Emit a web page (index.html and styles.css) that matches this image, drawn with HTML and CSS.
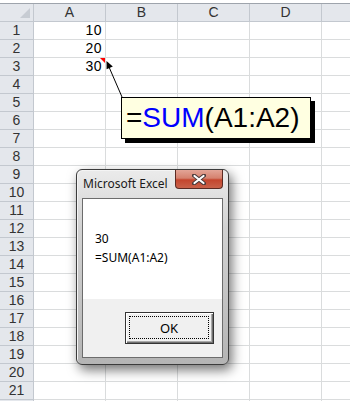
FILE: index.html
```html
<!DOCTYPE html>
<html>
<head>
<meta charset="utf-8">
<link rel="stylesheet" href="styles.css">
</head>
<body>
<div class="sheet">
  <div class="grid">
    <div class="corner"><span class="tri"></span></div>
    <div class="colh">A</div><div class="colh">B</div><div class="colh">C</div><div class="colh">D</div><div class="colh"></div>

    <div class="rh">1</div><div class="c num">10</div><div class="c"></div><div class="c"></div><div class="c"></div><div class="c"></div>
    <div class="rh">2</div><div class="c num">20</div><div class="c"></div><div class="c"></div><div class="c"></div><div class="c"></div>
    <div class="rh">3</div><div class="c num note">30</div><div class="c"></div><div class="c"></div><div class="c"></div><div class="c"></div>
    <div class="rh">4</div><div class="c"></div><div class="c"></div><div class="c"></div><div class="c"></div><div class="c"></div>
    <div class="rh">5</div><div class="c"></div><div class="c"></div><div class="c"></div><div class="c"></div><div class="c"></div>
    <div class="rh">6</div><div class="c"></div><div class="c"></div><div class="c"></div><div class="c"></div><div class="c"></div>
    <div class="rh">7</div><div class="c"></div><div class="c"></div><div class="c"></div><div class="c"></div><div class="c"></div>
    <div class="rh">8</div><div class="c"></div><div class="c"></div><div class="c"></div><div class="c"></div><div class="c"></div>
    <div class="rh">9</div><div class="c"></div><div class="c"></div><div class="c"></div><div class="c"></div><div class="c"></div>
    <div class="rh">10</div><div class="c"></div><div class="c"></div><div class="c"></div><div class="c"></div><div class="c"></div>
    <div class="rh">11</div><div class="c"></div><div class="c"></div><div class="c"></div><div class="c"></div><div class="c"></div>
    <div class="rh">12</div><div class="c"></div><div class="c"></div><div class="c"></div><div class="c"></div><div class="c"></div>
    <div class="rh">13</div><div class="c"></div><div class="c"></div><div class="c"></div><div class="c"></div><div class="c"></div>
    <div class="rh">14</div><div class="c"></div><div class="c"></div><div class="c"></div><div class="c"></div><div class="c"></div>
    <div class="rh">15</div><div class="c"></div><div class="c"></div><div class="c"></div><div class="c"></div><div class="c"></div>
    <div class="rh">16</div><div class="c"></div><div class="c"></div><div class="c"></div><div class="c"></div><div class="c"></div>
    <div class="rh">17</div><div class="c"></div><div class="c"></div><div class="c"></div><div class="c"></div><div class="c"></div>
    <div class="rh">18</div><div class="c"></div><div class="c"></div><div class="c"></div><div class="c"></div><div class="c"></div>
    <div class="rh">19</div><div class="c"></div><div class="c"></div><div class="c"></div><div class="c"></div><div class="c"></div>
    <div class="rh">20</div><div class="c"></div><div class="c"></div><div class="c"></div><div class="c"></div><div class="c"></div>
    <div class="rh">21</div><div class="c"></div><div class="c"></div><div class="c"></div><div class="c"></div><div class="c"></div>
    <div class="rh"></div><div class="c"></div><div class="c"></div><div class="c"></div><div class="c"></div><div class="c"></div>
  </div>

  <svg class="arrow" width="350" height="401" viewBox="0 0 350 401">
    <line x1="122" y1="97" x2="109" y2="67" stroke="#000" stroke-width="1"/>
    <polygon points="106.5,61 112.8,66.6 106.6,69.2" fill="#000"/>
  </svg>

  <div class="callout"><span class="eq">=</span><span class="fn">SUM</span><span class="eq">(A1:A2)</span></div>

  <div class="dialog">
    <div class="titlebar">
      <span class="title">Microsoft Excel</span>
      <span class="close">
        <svg width="14" height="11" viewBox="0 0 14 11">
          <path d="M2 1.5 L12 9.5 M12 1.5 L2 9.5" stroke="#4a3a3a" stroke-width="4" stroke-linecap="round"/>
          <path d="M2.5 2 L11.5 9 M11.5 2 L2.5 9" stroke="#fff" stroke-width="2.2" stroke-linecap="round"/>
        </svg>
      </span>
    </div>
    <div class="client">
      <div class="message">
        <div>30</div>
        <div>=SUM(A1:A2)</div>
      </div>
      <div class="buttons">
        <div class="okbtn"><span class="okfocus">OK</span></div>
      </div>
    </div>
  </div>
</div>
</body>
</html>
```

FILE: styles.css
```css
html, body {
  margin: 0;
  padding: 0;
}
body {
  width: 350px;
  height: 401px;
  overflow: hidden;
  background: #fff;
  font-family: "Liberation Sans", Arial, sans-serif;
}
.sheet {
  position: relative;
  width: 350px;
  height: 401px;
  overflow: hidden;
  padding-top: 3px;
  box-sizing: border-box;
}
.grid {
  display: grid;
  grid-template-columns: 34px repeat(5, 72px);
  grid-auto-rows: 18px;
  border-top: 1px solid #9ea4ac;
  width: 394px;
}
.grid > div {
  box-sizing: border-box;
}
.corner {
  background: #e4e7ec;
  border-right: 1px solid #c3c8cf;
  border-bottom: 1px solid #c3c8cf;
  position: relative;
}
.tri {
  position: absolute;
  right: 3px;
  bottom: 3px;
  width: 0;
  height: 0;
  border-left: 10px solid transparent;
  border-bottom: 10px solid #c7ccd3;
}
.colh {
  background: #e4e7ec;
  border-right: 1px solid #c3c8cf;
  border-bottom: 1px solid #c3c8cf;
  text-align: center;
  font-size: 14px;
  line-height: 17px;
  color: #333;
}
.rh {
  background: #e4e7ec;
  border-right: 1px solid #c3c8cf;
  border-bottom: 1px solid #c3c8cf;
  text-align: center;
  font-size: 14px;
  line-height: 17px;
  color: #333;
}
.c {
  border-right: 1px solid #dadcdd;
  border-bottom: 1px solid #dadcdd;
  font-size: 14px;
  line-height: 17px;
  color: #000;
}
.num {
  text-align: right;
  padding-right: 3px;
  letter-spacing: 0.5px;
}
.note {
  position: relative;
}
.note::after {
  content: "";
  position: absolute;
  top: 0;
  right: 0;
  width: 0;
  height: 0;
  border-left: 5px solid transparent;
  border-top: 5px solid #ff0000;
}
.arrow {
  position: absolute;
  left: 0;
  top: 0;
}
.callout {
  position: absolute;
  left: 121px;
  top: 97px;
  width: 190px;
  height: 42px;
  box-sizing: border-box;
  border: 1px solid #000;
  background: #ffffe1;
  box-shadow: 4px 4px 0 #000;
  padding-left: 4px;
  font-size: 28px;
  line-height: 40px;
  white-space: nowrap;
  overflow: hidden;
}
.eq { color: #000; }
.fn { color: #0000ff; }

.dialog {
  position: absolute;
  left: 76px;
  top: 169px;
  width: 153px;
  height: 196px;
  box-sizing: border-box;
  border: 1px solid #3b3b3b;
  border-radius: 6px;
  background: linear-gradient(#ebebeb, #d2d2d2 30%, #c2c2c2 70%, #b4b4b4);
  padding: 0 5px 6px 5px;
  display: flex;
  flex-direction: column;
  box-shadow: 3px 5px 12px rgba(0,0,0,0.55), inset 1px 1px 0 #f4f4f4;
  font-family: "Noto Sans", "Open Sans", sans-serif;
}
.titlebar {
  height: 28px;
  display: flex;
  align-items: flex-start;
  justify-content: space-between;
}
.title {
  font-size: 12px;
  line-height: 20px;
  margin-top: 4px;
  padding-left: 1px;
  color: #1a1a1a;
}
.close {
  width: 48px;
  height: 19px;
  box-sizing: border-box;
  border: 1px solid #5b2a22;
  border-top: none;
  border-radius: 0 0 4px 4px;
  background: linear-gradient(#e3a597, #d5826f 45%, #c4452d 55%, #c9624a);
  display: flex;
  align-items: center;
  justify-content: center;
}
.close svg {
  display: block;
}
.client {
  flex: 1;
  border: 1px solid #6c6c6c;
  background: #fff;
  display: flex;
  flex-direction: column;
}
.message {
  flex: 1;
  padding: 30px 12px 0 12px;
  font-size: 12px;
  line-height: 19px;
  color: #000;
}
.buttons {
  height: 58px;
  background: #f0f0f0;
  display: flex;
  justify-content: flex-end;
  align-items: flex-start;
  padding: 13px 8px 0 0;
  box-sizing: border-box;
}
.okbtn {
  width: 89px;
  height: 32px;
  box-sizing: border-box;
  border: 1px solid #333;
  background: #f0f0f0;
  box-shadow: inset 1px 1px 0 #fff, inset -1px -1px 0 #6f6f6f, inset -2px -2px 0 #a8a8a8;
  padding: 3px 4px 4px 3px;
  display: flex;
}
.okfocus {
  flex: 1;
  border: 1px dotted #000;
  display: flex;
  align-items: center;
  justify-content: center;
  font-size: 13px;
  color: #000;
}
```
